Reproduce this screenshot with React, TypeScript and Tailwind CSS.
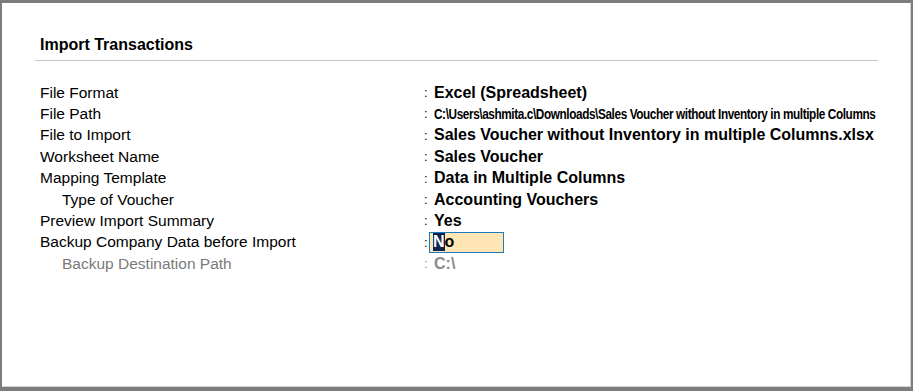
const rows: { label: string; value: string; indent?: boolean; muted?: boolean; path?: boolean; edit?: boolean }[] = [
  { label: 'File Format', value: 'Excel (Spreadsheet)' },
  { label: 'File Path', value: 'C:\\Users\\ashmita.c\\Downloads\\Sales Voucher without Inventory in multiple Columns', path: true },
  { label: 'File to Import', value: 'Sales Voucher without Inventory in multiple Columns.xlsx' },
  { label: 'Worksheet Name', value: 'Sales Voucher' },
  { label: 'Mapping Template', value: 'Data in Multiple Columns' },
  { label: 'Type of Voucher', value: 'Accounting Vouchers', indent: true },
  { label: 'Preview Import Summary', value: 'Yes' },
  { label: 'Backup Company Data before Import', value: 'No', edit: true },
  { label: 'Backup Destination Path', value: 'C:\\', indent: true, muted: true },
];

export default function App() {
  return (
    <div className="w-[915px] h-[392px] bg-white font-['Liberation_Sans',Arial,sans-serif] text-black">
      <div className="w-[913px] h-[391px] border-t-[3px] border-l-2 border-r-2 border-b-[4px] border-[#7d7d7d]">
        <div className="h-full border-r border-b border-[#d4d4d4] pt-[32px] pl-[33px] pr-[32px]">
          <div className="border-b border-[#c4c4c4] pl-[5px] pb-[6px] text-[16px] font-bold leading-[19px]">Import Transactions</div>
          <div className="pt-[21px] pl-[5px]">
            {rows.map((r) => (
              <div key={r.label} className="flex items-center h-[21.4px]">
                <div className={`w-[384px] shrink-0 text-[15.5px] leading-[18px] ${r.indent ? 'pl-[22px]' : ''} ${r.muted ? 'text-[#7a7a7a]' : ''}`}>{r.label}</div>
                <div className={`w-[10px] shrink-0 text-[13px] ${r.muted ? 'text-[#8a8a8a]' : ''}`}>:</div>
                {r.edit ? (
                  <div className="w-[75px] h-[21px] -ml-[5px] shrink-0 border border-[#1a7cc0] bg-[#fde6b3] flex items-center pl-[3px] text-[16px] font-bold leading-[18px]">
                    <span className="bg-[#0d2450] text-white">N</span>o
                  </div>
                ) : r.path ? (
                  <div className="whitespace-nowrap shrink-0 text-[15px] font-bold leading-[18px] tracking-[-0.5px] origin-left scale-x-[0.785]">{r.value}</div>
                ) : (
                  <div className={`whitespace-nowrap text-[16px] font-bold leading-[18px] ${r.muted ? 'text-[#8a8a8a]' : ''}`}>{r.value}</div>
                )}
              </div>
            ))}
          </div>
        </div>
      </div>
    </div>
  );
}
